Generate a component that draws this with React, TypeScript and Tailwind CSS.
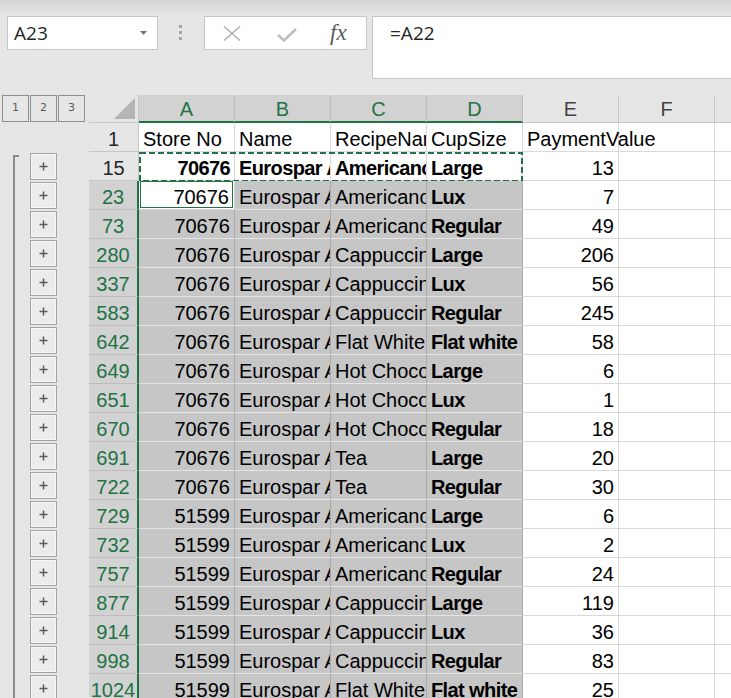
import React from "react";

const GREEN = "#217346";

type Row = [number, string, string, string, string, string];

const ROWS: Row[] = [
  [15, "70676", "Eurospar Athlone", "Americano", "Large", "13"],
  [23, "70676", "Eurospar Athlone", "Americano", "Lux", "7"],
  [73, "70676", "Eurospar Athlone", "Americano", "Regular", "49"],
  [280, "70676", "Eurospar Athlone", "Cappuccino", "Large", "206"],
  [337, "70676", "Eurospar Athlone", "Cappuccino", "Lux", "56"],
  [583, "70676", "Eurospar Athlone", "Cappuccino", "Regular", "245"],
  [642, "70676", "Eurospar Athlone", "Flat White", "Flat white", "58"],
  [649, "70676", "Eurospar Athlone", "Hot Chocolate", "Large", "6"],
  [651, "70676", "Eurospar Athlone", "Hot Chocolate", "Lux", "1"],
  [670, "70676", "Eurospar Athlone", "Hot Chocolate", "Regular", "18"],
  [691, "70676", "Eurospar Athlone", "Tea", "Large", "20"],
  [722, "70676", "Eurospar Athlone", "Tea", "Regular", "30"],
  [729, "51599", "Eurospar Athlone", "Americano", "Large", "6"],
  [732, "51599", "Eurospar Athlone", "Americano", "Lux", "2"],
  [757, "51599", "Eurospar Athlone", "Americano", "Regular", "24"],
  [877, "51599", "Eurospar Athlone", "Cappuccino", "Large", "119"],
  [914, "51599", "Eurospar Athlone", "Cappuccino", "Lux", "36"],
  [998, "51599", "Eurospar Athlone", "Cappuccino", "Regular", "83"],
  [1024, "51599", "Eurospar Athlone", "Flat White", "Flat white", "25"],
];

const FormulaBar = () => (
  <div className="h-[95px] flex flex-col">
    <div className="h-[16px] bg-linear-to-b from-[#d5d5d5] to-[#e6e6e6]" />
    <div className="flex items-start pl-[7px]">
      <div className="w-[151px] h-[34px] bg-white border border-[#c6c6c6] flex items-center justify-between pl-[6px] pr-[10px]">
        <span className="text-[19px] text-[#262626] font-['Open_Sans',sans-serif] leading-none">A23</span>
        <svg width="7" height="4" viewBox="0 0 7 4">
          <path d="M0 0 L7 0 L3.5 4 Z" fill="#757575" />
        </svg>
      </div>
      <div className="ml-[21px] mt-[9px] flex flex-col gap-[3px]">
        <div className="w-[3px] h-[3px] bg-[#a6a6a6]" />
        <div className="w-[3px] h-[3px] bg-[#a6a6a6]" />
        <div className="w-[3px] h-[3px] bg-[#a6a6a6]" />
      </div>
      <div className="ml-[22px] w-[163px] h-[34px] bg-white border border-[#c6c6c6] flex items-center">
        <svg className="ml-[18px]" width="18" height="15" viewBox="0 0 18 15">
          <path d="M1 0.5 L17 14.5 M17 0.5 L1 14.5" stroke="#b4b4b4" strokeWidth="1.6" />
        </svg>
        <svg className="ml-[36px] mt-[4px]" width="20" height="14" viewBox="0 0 20 14">
          <path d="M1 7 L7 12.5 L19 1" stroke="#bdbdbd" strokeWidth="2.6" fill="none" />
        </svg>
        <span className="ml-[33px] -mt-[2px] text-[23px] italic text-[#595959] font-['Liberation_Serif',serif] leading-none">
          fx
        </span>
      </div>
      <div className="ml-[5px] flex-1 h-[63px] bg-white border border-[#c6c6c6] border-r-0 pl-[17px]">
        <div className="h-[32px] flex items-center text-[19px] text-[#262626] font-['Open_Sans',sans-serif] leading-none">
          =A22
        </div>
      </div>
    </div>
  </div>
);

const PlusBox = () => (
  <div className="w-[27px] h-[27px] mt-[1px] border border-[#a3a3a3] shadow-[inset_0_0_0_1px_#f7f7f7] bg-[#ececec] flex items-center justify-center">
    <svg width="9" height="9" viewBox="0 0 9 9">
      <path d="M4.5 0.5 V8.5 M0.5 4.5 H8.5" stroke="#595959" strokeWidth="1.5" />
    </svg>
  </div>
);

const OutlineCell = ({ first }: { first: boolean }) => (
  <div className="w-[89px] flex shrink-0">
    <div className="w-[13px]" />
    {first ? (
      <div className="w-[6px] mt-[3px] border-l-2 border-t-2 border-[#8a8a8a]" />
    ) : (
      <div className="w-[6px] border-l-2 border-[#8a8a8a]" />
    )}
    <div className="w-[11px]" />
    <PlusBox />
  </div>
);

const RowHead = ({ n, sel }: { n: number; sel: boolean }) => (
  <div
    className={
      sel
        ? "w-[50px] shrink-0 bg-[#d2d2d2] text-[#217346] border-b border-[#bcbcbc] border-r-2 border-r-[#217346] text-center"
        : "w-[50px] shrink-0 bg-[#e6e6e6] text-[#262626] border-b border-r border-[#c6c6c6] text-center"
    }
  >
    {n}
  </div>
);

const Cell = ({
  v,
  right,
  sel,
  bold,
  overflow,
}: {
  v: string;
  right?: boolean;
  sel?: boolean;
  bold?: boolean;
  overflow?: boolean;
}) => (
  <div
    className={[
      "w-[96px] shrink-0 px-[4px] whitespace-nowrap",
      overflow ? "overflow-visible relative z-10" : "overflow-hidden",
      right ? "text-right" : "text-left",
      bold ? "font-bold tracking-[-0.6px]" : "",
      sel
        ? "bg-[#c6c6c6] border-r border-r-[#aaaaaa] border-b border-b-[#e4e4e4]"
        : "bg-white border-r border-b border-[#d9d9d9]",
    ].join(" ")}
  >
    {v}
  </div>
);

const ColHead = ({ l, sel }: { l: string; sel: boolean }) => (
  <div
    className={
      sel
        ? "w-[96px] shrink-0 bg-[#d2d2d2] text-[#217346] border-r border-r-[#bdbdbd] border-b-2 border-b-[#217346] text-center leading-[28px]"
        : "w-[96px] shrink-0 bg-[#e6e6e6] text-[#444444] border-r border-[#c6c6c6] border-b text-center leading-[29px]"
    }
  >
    {l}
  </div>
);

const Grid = () => (
  <div className="font-['Liberation_Sans',Arial,sans-serif] text-[20px] text-black">
    {/* column headers */}
    <div className="flex h-[28px]">
      <div className="w-[89px] shrink-0 flex gap-[1px] pl-[2px]">
        {["1", "2", "3"].map((n) => (
          <div
            key={n}
            className="w-[27px] h-[27px] border border-[#8f8f8f] flex items-center justify-center text-[11px] text-[#595959] font-['DejaVu_Sans',sans-serif]"
          >
            {n}
          </div>
        ))}
      </div>
      <div className="w-[50px] shrink-0 border-r border-b border-[#c6c6c6] flex items-end justify-end pr-[3px] pb-[3px]">
        <svg width="21" height="21" viewBox="0 0 21 21">
          <path d="M21 0 L21 21 L0 21 Z" fill="#b4b4b4" />
        </svg>
      </div>
      {["A", "B", "C", "D", "E", "F"].map((l, i) => (
        <ColHead key={l} l={l} sel={i < 4} />
      ))}
      <div className="flex-1 bg-[#e6e6e6] border-b border-[#c6c6c6]" />
    </div>

    {/* row 1 */}
    <div className="flex h-[29px] leading-[32px]">
      <div className="w-[89px] shrink-0" />
      <RowHead n={1} sel={false} />
      <Cell v="Store No" />
      <Cell v="Name" />
      <Cell v="RecipeName" />
      <Cell v="CupSize" />
      <Cell v="PaymentValue" overflow />
      <div className="w-[96px] shrink-0 bg-white border-b border-r border-[#d9d9d9]" />
      <div className="flex-1 bg-white border-b border-[#d9d9d9]" />
    </div>

    {ROWS.map((r, idx) => {
      const [n, store, name, recipe, cup, pay] = r;
      const sel = idx > 0;
      const first = idx === 0;
      return (
        <div key={n} className="flex h-[29px] leading-[32px]">
          <OutlineCell first={first} />
          <RowHead n={n} sel={sel} />
          {first ? (
            <div className="relative flex">
              <Cell v={store} right bold />
              <Cell v={name} bold />
              <Cell v={recipe} bold />
              <Cell v={cup} bold />
              <svg className="absolute inset-0 pointer-events-none" width="384" height="29">
                <rect
                  x="1"
                  y="1"
                  width="382"
                  height="28"
                  fill="none"
                  stroke={GREEN}
                  strokeWidth="2"
                  strokeDasharray="6 3"
                />
              </svg>
            </div>
          ) : (
            <>
              {idx === 1 ? (
                <div className="w-[96px] shrink-0 bg-white border-r border-b border-[#d9d9d9] p-[1px] pt-0">
                  <div className="h-full border border-[#217346] text-right pr-[3px] leading-[30px]">{store}</div>
                </div>
              ) : (
                <Cell v={store} right sel />
              )}
              <Cell v={name} sel />
              <Cell v={recipe} sel />
              <Cell v={cup} sel bold />
            </>
          )}
          <Cell v={pay} right />
          <div className="w-[96px] shrink-0 bg-white border-b border-r border-[#d9d9d9]" />
          <div className="flex-1 bg-white border-b border-[#d9d9d9]" />
        </div>
      );
    })}
  </div>
);

export default function App() {
  return (
    <div className="w-[731px] h-[698px] overflow-hidden bg-[#e6e6e6]">
      <FormulaBar />
      <Grid />
    </div>
  );
}
